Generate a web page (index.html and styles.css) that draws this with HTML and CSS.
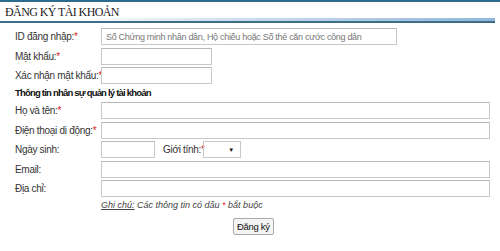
FILE: index.html
```html
<!DOCTYPE html>
<html lang="vi">
<head>
  <meta charset="UTF-8" />
  <title>Đăng ký tài khoản</title>
  <link rel="stylesheet" href="styles.css">
</head>
<body>
  <div class="page">
    <div class="title-bar">
      <h1>ĐĂNG KÝ TÀI KHOẢN</h1>
    </div>

    <form class="reg-form">
      <div class="row">
        <label>ID đăng nhập:<span class="req">*</span></label>
        <input type="text" class="w-id" placeholder="Số Chứng minh nhân dân, Hộ chiếu hoặc Số thẻ căn cước công dân">
      </div>
      <div class="row">
        <label>Mật khẩu:<span class="req">*</span></label>
        <input type="password" class="w-pass">
      </div>
      <div class="row">
        <label>Xác nhận mật khẩu:<span class="req">*</span></label>
        <input type="password" class="w-pass">
      </div>

      <div class="section">Thông tin nhân sự quản lý tài khoản</div>

      <div class="row">
        <label>Họ và tên:<span class="req">*</span></label>
        <input type="text" class="w-full">
      </div>
      <div class="row">
        <label>Điện thoại di động:<span class="req">*</span></label>
        <input type="text" class="w-full">
      </div>
      <div class="row">
        <label>Ngày sinh:</label>
        <div class="inline">
          <input type="text" class="w-date">
          <label class="sub-label">Giới tính:<span class="req">*</span></label>
          <div class="select">
            <span class="arrow">&#9660;</span>
          </div>
        </div>
      </div>
      <div class="row">
        <label>Email:</label>
        <input type="text" class="w-full">
      </div>
      <div class="row">
        <label>Địa chỉ:</label>
        <input type="text" class="w-full">
      </div>

      <div class="row note-row">
        <span></span>
        <p class="note"><u>Ghi chú:</u> Các thông tin có dấu <span class="req">*</span> bắt buộc</p>
      </div>

      <div class="actions">
        <button type="button">Đăng ký</button>
      </div>
    </form>
  </div>
</body>
</html>
```

FILE: styles.css
```css
body {
  margin: 0;
  background: #fff;
  color: #333;
  font-family: "Liberation Sans", Arial, sans-serif;
  font-size: 10px;
  letter-spacing: -0.3px;
}

.page {
  width: 500px;
}

.title-bar {
  border-top: 2px solid #2d6b8c;
  padding: 0 5px 0 0;
}

.title-bar h1 {
  margin: 0;
  padding: 3px 0 2px 5px;
  height: 14px;
  font-family: "Liberation Serif", "Times New Roman", serif;
  font-weight: normal;
  font-size: 12px;
  line-height: 15px;
  letter-spacing: -0.6px;
  color: #222;
  background: linear-gradient(to right, #fff 0%, #fff 15%, #cfe0ef 45%, #8fb6da 100%) no-repeat left bottom / 100% 3px;
  border-bottom: 2px solid #3f6f87;
}

.reg-form {
  padding: 4px 0 0 15px;
}

.row {
  display: grid;
  grid-template-columns: 86px 1fr;
  align-items: center;
  height: 19.5px;
}

label {
  white-space: nowrap;
}

.req {
  color: #d22;
}

input {
  box-sizing: border-box;
  height: 17px;
  margin: 0;
  padding: 0 4px;
  border: 1px solid #c8c8c8;
  border-top-color: #b8b8b8;
  font-family: inherit;
  font-size: 9px;
  letter-spacing: -0.3px;
  color: #333;
}

input::placeholder {
  color: #777;
}

.w-id {
  width: 296px;
}

.w-pass {
  width: 111px;
}

.w-full {
  width: 389px;
}

.w-date {
  width: 54px;
}

.inline {
  display: flex;
  align-items: center;
}

.sub-label {
  margin-left: 8px;
  width: 40px;
}

.select {
  box-sizing: border-box;
  width: 38px;
  height: 17px;
  border: 1px solid #c8c8c8;
  display: flex;
  align-items: center;
  justify-content: flex-end;
  padding-right: 6px;
}

.arrow {
  font-size: 6px;
  color: #111;
}

.section {
  font-weight: bold;
  font-size: 9.5px;
  letter-spacing: -0.8px;
  color: #111;
  height: 15.5px;
  line-height: 14px;
}

.note-row {
  height: 12px;
}

.note {
  margin: 0;
  font-style: italic;
  font-size: 9px;
  letter-spacing: 0;
  color: #444;
  white-space: nowrap;
}

.actions {
  padding: 7.5px 0 0 218px;
}

button {
  height: 17px;
  padding: 0 3px;
  font-family: inherit;
  font-size: 9.5px;
  letter-spacing: -0.3px;
  color: #111;
  background: #f4f4f4;
  border: 1px solid #aaa;
  border-radius: 2px;
}
```
